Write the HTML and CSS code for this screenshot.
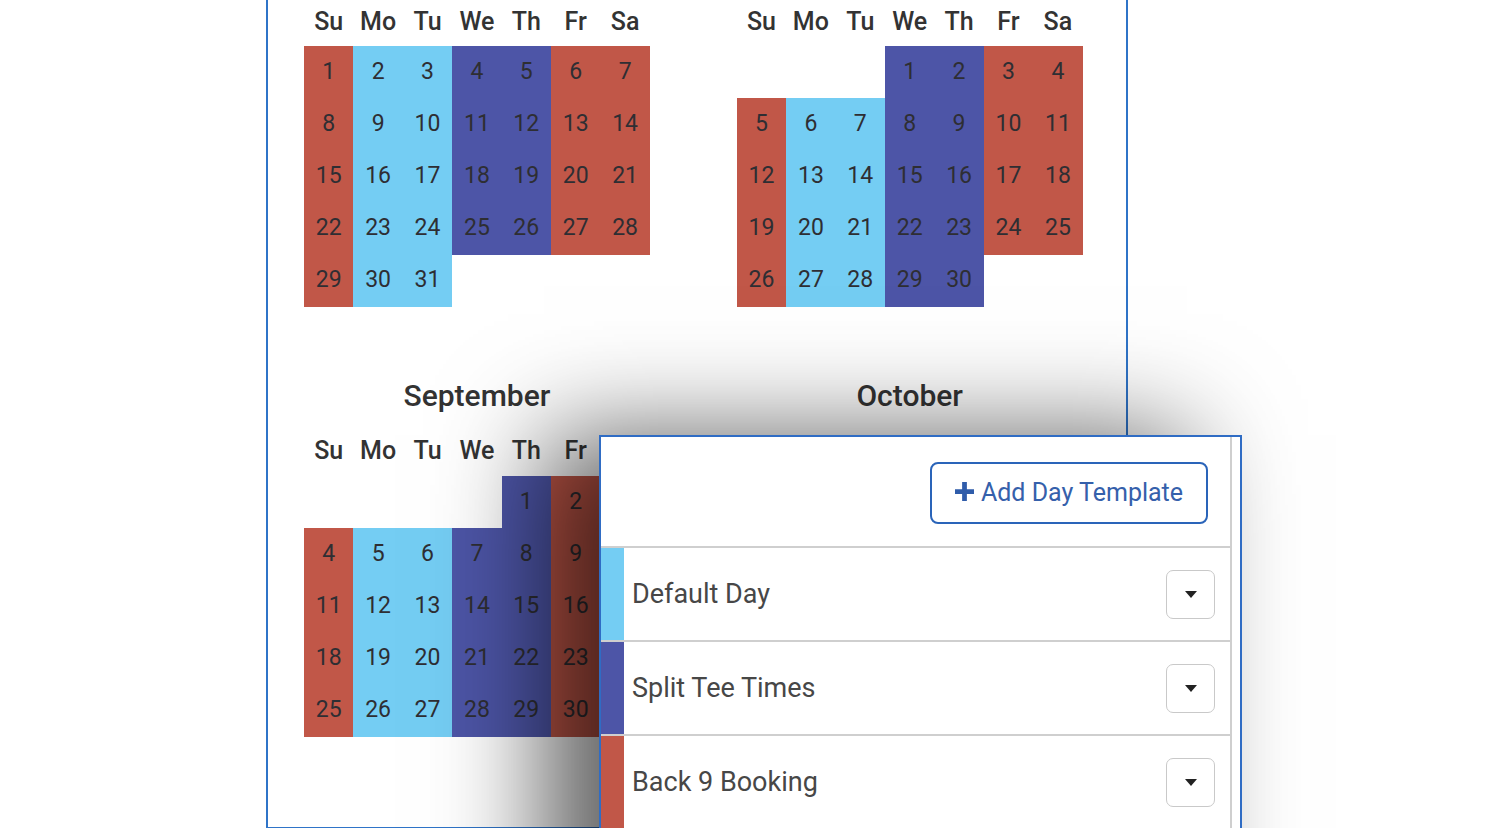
FILE: index.html
```html
<!DOCTYPE html>
<html>
<head>
<meta charset="utf-8">
<link rel="stylesheet" href="styles.css">
</head>
<body>
<div class="page">
  <div class="calendar-board">
    <section class="month">
      <h2 class="month-title">May</h2>
      <div class="weekdays"><span>Su</span><span>Mo</span><span>Tu</span><span>We</span><span>Th</span><span>Fr</span><span>Sa</span></div>
      <div class="days">
        <span>1</span><span>2</span><span>3</span><span>4</span><span>5</span><span>6</span><span>7</span>
        <span>8</span><span>9</span><span>10</span><span>11</span><span>12</span><span>13</span><span>14</span>
        <span>15</span><span>16</span><span>17</span><span>18</span><span>19</span><span>20</span><span>21</span>
        <span>22</span><span>23</span><span>24</span><span>25</span><span>26</span><span>27</span><span>28</span>
        <span>29</span><span>30</span><span>31</span>
      </div>
    </section>
    <section class="month">
      <h2 class="month-title">June</h2>
      <div class="weekdays"><span>Su</span><span>Mo</span><span>Tu</span><span>We</span><span>Th</span><span>Fr</span><span>Sa</span></div>
      <div class="days">
        <span class="e"></span><span class="e"></span><span class="e"></span><span>1</span><span>2</span><span>3</span><span>4</span>
        <span>5</span><span>6</span><span>7</span><span>8</span><span>9</span><span>10</span><span>11</span>
        <span>12</span><span>13</span><span>14</span><span>15</span><span>16</span><span>17</span><span>18</span>
        <span>19</span><span>20</span><span>21</span><span>22</span><span>23</span><span>24</span><span>25</span>
        <span>26</span><span>27</span><span>28</span><span>29</span><span>30</span>
      </div>
    </section>
    <section class="month">
      <h2 class="month-title">September</h2>
      <div class="weekdays"><span>Su</span><span>Mo</span><span>Tu</span><span>We</span><span>Th</span><span>Fr</span><span>Sa</span></div>
      <div class="days">
        <span class="e"></span><span class="e"></span><span class="e"></span><span class="e"></span><span>1</span><span>2</span><span>3</span>
        <span>4</span><span>5</span><span>6</span><span>7</span><span>8</span><span>9</span><span>10</span>
        <span>11</span><span>12</span><span>13</span><span>14</span><span>15</span><span>16</span><span>17</span>
        <span>18</span><span>19</span><span>20</span><span>21</span><span>22</span><span>23</span><span>24</span>
        <span>25</span><span>26</span><span>27</span><span>28</span><span>29</span><span>30</span>
      </div>
    </section>
    <section class="month">
      <h2 class="month-title">October</h2>
      <div class="weekdays"><span>Su</span><span>Mo</span><span>Tu</span><span>We</span><span>Th</span><span>Fr</span><span>Sa</span></div>
      <div class="days">
        <span class="e"></span><span class="e"></span><span class="e"></span><span class="e"></span><span class="e"></span><span class="e"></span><span>1</span>
        <span>2</span><span>3</span><span>4</span><span>5</span><span>6</span><span>7</span><span>8</span>
        <span>9</span><span>10</span><span>11</span><span>12</span><span>13</span><span>14</span><span>15</span>
        <span>16</span><span>17</span><span>18</span><span>19</span><span>20</span><span>21</span><span>22</span>
        <span>23</span><span>24</span><span>25</span><span>26</span><span>27</span><span>28</span><span>29</span>
        <span>30</span><span>31</span>
      </div>
    </section>
  </div>

  <aside class="template-panel">
    <div class="panel-inner">
      <div class="panel-head">
        <button class="add-btn">
          <svg class="plus" viewBox="0 0 20 20" width="19" height="19"><path d="M7.5 0h5v7.5H20v5h-7.5V20h-5v-7.5H0v-5h7.5z" fill="currentColor"/></svg>
          <span>Add Day Template</span>
        </button>
      </div>
      <div class="tpl-row">
        <div class="stripe light"></div>
        <div class="tpl-name">Default Day</div>
        <button class="drop-btn"><svg viewBox="0 0 12 7" width="12" height="7"><path d="M0 0h12L6 7z" fill="#222"/></svg></button>
      </div>
      <div class="tpl-row">
        <div class="stripe indigo"></div>
        <div class="tpl-name">Split Tee Times</div>
        <button class="drop-btn"><svg viewBox="0 0 12 7" width="12" height="7"><path d="M0 0h12L6 7z" fill="#222"/></svg></button>
      </div>
      <div class="tpl-row">
        <div class="stripe red"></div>
        <div class="tpl-name">Back 9 Booking</div>
        <button class="drop-btn"><svg viewBox="0 0 12 7" width="12" height="7"><path d="M0 0h12L6 7z" fill="#222"/></svg></button>
      </div>
    </div>
  </aside>
</div>
</body>
</html>
```

FILE: styles.css
```css
html, body {
  margin: 0;
  padding: 0;
  background: #ffffff;
  overflow: hidden;
}

body {
  font-family: Roboto, "Liberation Sans", Arial, sans-serif;
  color: #333333;
  width: 1500px;
  height: 828px;
}

.page {
  position: relative;
  display: flow-root;
  width: 1500px;
  height: 828px;
  padding-left: 266px;
  box-sizing: border-box;
}

.calendar-board {
  margin-top: -58px;
  width: 862px;
  box-sizing: border-box;
  border: 2px solid #2f74c8;
  padding: 2px 0 38px 36px;
  display: grid;
  grid-template-columns: 345.8px 345.8px;
  column-gap: 87px;
  row-gap: 69px;
  align-items: start;
}

.month-title {
  margin: 0;
  height: 40px;
  line-height: 40px;
  text-align: center;
  font-size: 30px;
  font-weight: 500;
  color: #333;
}

.weekdays {
  margin-top: 15px;
  height: 40px;
  display: grid;
  grid-template-columns: repeat(7, 1fr);
  align-items: center;
  text-align: center;
  font-size: 25px;
  font-weight: 500;
  color: #333;
}

.days {
  margin-top: 5px;
  display: grid;
  grid-template-columns: repeat(7, 1fr);
  grid-auto-rows: 52.2px;
}

.days span {
  display: flex;
  align-items: center;
  justify-content: center;
  padding-bottom: 2px;
  box-sizing: border-box;
  font-size: 23px;
  color: #2e2e33;
}

.days span:nth-child(7n+1),
.days span:nth-child(7n+6),
.days span:nth-child(7n+7) {
  background: #c15748;
}

.days span:nth-child(7n+2),
.days span:nth-child(7n+3) {
  background: #74cdf3;
}

.days span:nth-child(7n+4),
.days span:nth-child(7n+5) {
  background: #4d55a7;
}

.days span.e {
  background: transparent;
}

/* overlay panel */
.template-panel {
  position: absolute;
  left: 599px;
  top: 435px;
  width: 643px;
  height: 520px;
  box-sizing: border-box;
  background: #fff;
  border: 2px solid #2f6cc4;
  border-bottom: none;
  box-shadow: -55px 0 100px rgba(0, 0, 0, 0.62);
}

.panel-inner {
  margin-right: 8px;
  height: 100%;
  border-right: 2px solid #cfcfcf;
}

.panel-head {
  height: 111px;
  display: flex;
  align-items: flex-start;
  justify-content: flex-end;
  padding: 25px 22px 0 0;
  box-sizing: border-box;
  border-bottom: 2px solid #cfcfcf;
}

.add-btn {
  width: 278px;
  height: 62px;
  border: 2px solid #2a64b9;
  border-radius: 8px;
  background: #fff;
  color: #3560ab;
  font-family: Roboto, "Liberation Sans", Arial, sans-serif;
  font-size: 25px;
  display: flex;
  align-items: center;
  justify-content: center;
  gap: 7px;
  padding: 0 0 2px 0;
  cursor: pointer;
}

.add-btn .plus {
  color: #2f5caa;
  margin-top: -2px;
}

.tpl-row {
  height: 92px;
  display: flex;
  align-items: center;
  border-bottom: 2px solid #cfcfcf;
}

.stripe {
  width: 23px;
  align-self: stretch;
}

.stripe.light { background: #74cdf3; }
.stripe.indigo { background: #4d55a7; }
.stripe.red { background: #c15748; }

.tpl-name {
  flex: 1;
  padding-left: 8px;
  font-size: 27px;
  color: #474747;
}

.drop-btn {
  width: 49px;
  height: 49px;
  margin-right: 15px;
  border: 1.5px solid #c9c9c9;
  border-radius: 7px;
  background: #fff;
  display: flex;
  align-items: center;
  justify-content: center;
  padding: 0;
}
```
